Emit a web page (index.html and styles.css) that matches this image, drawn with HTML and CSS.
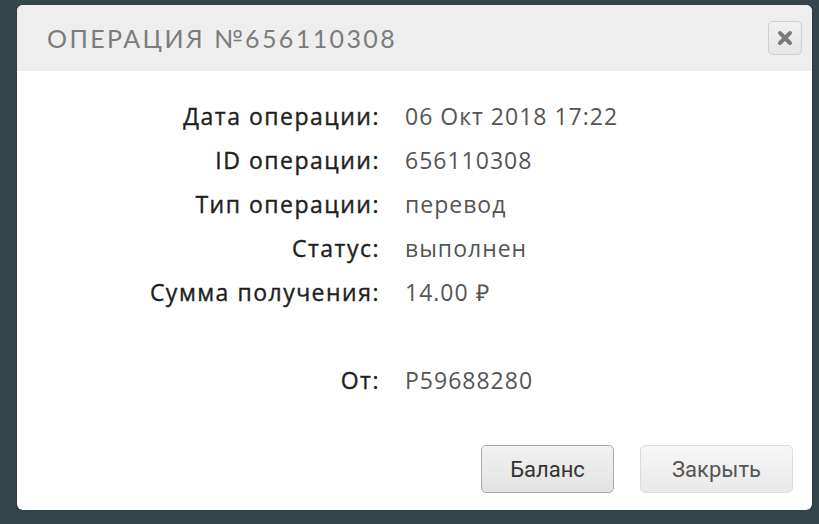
FILE: index.html
```html
<!DOCTYPE html>
<html>
  <head>
    <meta charset="utf-8">
    <title>Операция №656110308</title>
    <link rel="stylesheet" href="styles.css">
  </head>
  <body>
    <div class="modal">
      <div class="modal-header">
        <h2 class="modal-title">Операция №656110308</h2>
        <button class="close" aria-label="Закрыть">
          <svg width="16" height="16" viewBox="0 0 16 16">
            <path d="M3 3 L13 13 M13 3 L3 13" stroke="#7a7a7a" stroke-width="4" stroke-linecap="round"/>
          </svg>
        </button>
      </div>
      <div class="modal-body">
        <dl class="details">
          <dt>Дата операции:</dt><dd>06 Окт 2018 17:22</dd>
          <dt>ID операции:</dt><dd>656110308</dd>
          <dt>Тип операции:</dt><dd>перевод</dd>
          <dt>Статус:</dt><dd>выполнен</dd>
          <dt>Сумма получения:</dt><dd>14.00 ₽</dd>
          <dt class="spacer"></dt><dd class="spacer"></dd>
          <dt>От:</dt><dd>P59688280</dd>
        </dl>
      </div>
      <div class="modal-footer">
        <button class="btn btn-active">Баланс</button>
        <button class="btn btn-wide">Закрыть</button>
      </div>
    </div>
  </body>
</html>
```

FILE: styles.css
```css
body {
  margin: 0;
  background: #36444c;
  font-family: "Open Sans", sans-serif;
}

.modal {
  margin: 5px 7px 0 17px;
  width: 795px;
  background: #fff;
  border-radius: 6px;
  box-shadow: 0 2px 2px rgba(0, 0, 0, 0.35);
  overflow: hidden;
}

.modal-header {
  height: 66px;
  background: #eeeeee;
  display: flex;
  align-items: center;
  justify-content: space-between;
  padding: 0 10px 0 30px;
}

.modal-title {
  margin: 0;
  font-family: "Lato", sans-serif;
  font-weight: normal;
  font-size: 25px;
  letter-spacing: 2.4px;
  text-transform: uppercase;
  color: #7c7c7c;
}

.close {
  width: 34px;
  height: 34px;
  padding: 0;
  display: flex;
  align-items: center;
  justify-content: center;
  background: linear-gradient(#f2f2f2, #e6e6e6);
  border: 1px solid #cfcfcf;
  border-radius: 5px;
}

.modal-body {
  padding: 23px 0 0;
}

.details {
  display: grid;
  grid-template-columns: 363px 1fr;
  column-gap: 25px;
  grid-auto-rows: 44px;
  align-items: center;
  margin: 0;
  font-size: 23px;
  letter-spacing: 1px;
}

.details dt {
  text-align: right;
  letter-spacing: 1.5px;
  color: #1f1f1f;
  -webkit-text-stroke: 0.4px #1f1f1f;
}

.details dd {
  margin: 0;
  color: #555;
}

.modal-footer {
  display: flex;
  justify-content: flex-end;
  gap: 26px;
  padding: 43px 19px 17px;
}

.btn {
  height: 48px;
  width: 133px;
  font-family: "Roboto", sans-serif;
  font-size: 22px;
  color: #555;
  background: linear-gradient(#f7f7f7, #e9e9e9);
  border: 1px solid #dcdcdc;
  border-radius: 5px;
}

.btn-active {
  color: #333;
  border-color: #a9a9a9;
  background: linear-gradient(#f2f2f2, #e2e2e2);
}

.btn-wide {
  width: 153px;
}
```
